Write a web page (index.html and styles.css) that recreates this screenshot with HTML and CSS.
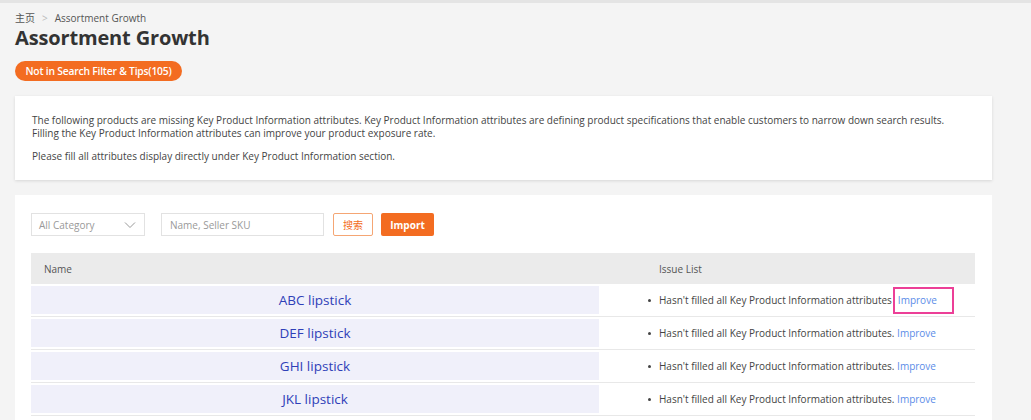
FILE: index.html
```html
<!DOCTYPE html>
<html lang="en">
  <head>
    <meta charset="UTF-8" />
    <title>Assortment Growth</title>
    <link rel="stylesheet" href="styles.css">
  </head>
  <body>
    <div class="page">
      <!-- Cabecera -->
      <div class="breadcrumb">
        <span>主页</span>
        <span class="sep">&gt;</span>
        <span>Assortment Growth</span>
      </div>
      <h1>Assortment Growth</h1>
      <button class="pill">Not in Search Filter &amp; Tips(105)</button>

      <!-- Aviso -->
      <div class="card notice">
        <p>
          The following products are missing Key Product Information attributes. Key Product Information attributes are defining product specifications that enable customers to narrow down search results.<br />
          Filling the Key Product Information attributes can improve your product exposure rate.
        </p>
        <p>Please fill all attributes display directly under Key Product Information section.</p>
      </div>

      <!-- Lista -->
      <div class="card list">
        <div class="filters">
          <div class="select">
            <span>All Category</span>
            <svg width="12" height="8" viewBox="0 0 12 8"><path d="M1 1.5 6 6.5 11 1.5" fill="none" stroke="#999" stroke-width="1" /></svg>
          </div>
          <input type="text" class="search" placeholder="Name, Seller SKU" />
          <button class="btn-outline">搜索</button>
          <button class="btn-fill">Import</button>
        </div>

        <div class="table">
          <div class="thead">
            <div class="col-name">Name</div>
            <div class="col-issue">Issue List</div>
          </div>
          <div class="row">
            <div class="col-name"><span class="name">ABC lipstick</span></div>
            <div class="col-issue">
              <span class="dot"></span>Hasn't filled all Key Product Information attributes<span class="hl"><a href="#">Improve</a></span>
            </div>
          </div>
          <div class="row">
            <div class="col-name"><span class="name">DEF lipstick</span></div>
            <div class="col-issue"><span class="dot"></span>Hasn't filled all Key Product Information attributes. <a href="#">Improve</a></div>
          </div>
          <div class="row">
            <div class="col-name"><span class="name">GHI lipstick</span></div>
            <div class="col-issue"><span class="dot"></span>Hasn't filled all Key Product Information attributes. <a href="#">Improve</a></div>
          </div>
          <div class="row">
            <div class="col-name"><span class="name">JKL lipstick</span></div>
            <div class="col-issue"><span class="dot"></span>Hasn't filled all Key Product Information attributes. <a href="#">Improve</a></div>
          </div>
        </div>
      </div>
    </div>
  </body>
</html>
```

FILE: styles.css
```css
* {
  margin: 0;
  padding: 0;
  box-sizing: border-box;
}

body {
  font-family: "Open Sans", Arial, "Noto Sans CJK SC", sans-serif;
  background-color: #f4f4f4;
  color: #333;
  border-top: 3px solid #e4e4e4;
  overflow: hidden;
}

.page {
  width: 977px;
  margin-left: 15px;
  padding-top: 8px;
}

.breadcrumb {
  font-size: 10px;
  color: #555;
  line-height: 14px;
  display: flex;
  gap: 7px;
}

.breadcrumb .sep {
  color: #bbb;
}

h1 {
  font-size: 20px;
  font-weight: 700;
  color: #333;
  line-height: 26px;
  letter-spacing: -0.15px;
}

.pill {
  margin-top: 10px;
  height: 20px;
  width: 167px;
  border: none;
  border-radius: 10px;
  background-color: #f36c21;
  color: #fff;
  font-family: inherit;
  font-size: 10.3px;
  font-weight: 600;
  letter-spacing: -0.2px;
}

.card {
  background-color: #fff;
}

.notice {
  margin-top: 15px;
  height: 84px;
  padding: 18px 17px 0;
  box-shadow: 0 1px 3px rgba(0, 0, 0, 0.12);
  font-size: 10px;
  line-height: 13px;
  color: #444;
}

.notice p + p {
  margin-top: 10px;
}

.list {
  margin-top: 15px;
  padding: 18px 17px 0 16px;
  height: 230px;
}

.filters {
  display: flex;
  align-items: center;
  height: 23px;
}

.select {
  width: 114px;
  height: 23px;
  border: 1px solid #e2e2e2;
  display: flex;
  align-items: center;
  justify-content: space-between;
  padding: 0 8px 0 7px;
  font-size: 10px;
  color: #999;
}

.search {
  width: 163px;
  height: 23px;
  margin-left: 16px;
  border: 1px solid #e2e2e2;
  padding: 0 8px;
  font-family: inherit;
  font-size: 10px;
  color: #333;
}

.search::placeholder {
  color: #999;
}

.btn-outline,
.btn-fill {
  height: 23px;
  border-radius: 2px;
  font-family: inherit;
  font-size: 10px;
}

.btn-outline {
  width: 40px;
  margin-left: 9px;
  border: 1px solid #f5a674;
  background-color: #fff;
  color: #f36c21;
}

.btn-fill {
  width: 53px;
  margin-left: 8px;
  border: none;
  background-color: #f36c21;
  color: #fff;
  font-weight: 700;
}

.table {
  margin-top: 17px;
  width: 944px;
}

.thead,
.row {
  display: grid;
  grid-template-columns: 568px 1fr;
}

.thead {
  height: 31px;
  background-color: #ebebeb;
  align-items: center;
  font-size: 10px;
  color: #555;
}

.thead .col-name {
  padding-left: 13px;
}

.thead .col-issue {
  padding-left: 60px;
}

.row {
  height: 33px;
  border-bottom: 1px solid #e8e8e8;
  padding: 2px 0 2px;
}

.row .col-name {
  background-color: #f0f0fa;
  display: flex;
  align-items: center;
  justify-content: center;
}

.name {
  font-size: 13.5px;
  font-weight: 500;
  color: #2f3fb8;
}

.row .col-issue {
  display: flex;
  align-items: center;
  padding-left: 49px;
  font-size: 10px;
  color: #444;
  white-space: pre;
}

.dot {
  width: 3px;
  height: 3px;
  border-radius: 50%;
  background-color: #444;
  margin-right: 8px;
}

.col-issue a {
  color: #5b8ce8;
  text-decoration: none;
}

.hl {
  display: flex;
  align-items: center;
  height: 27px;
  margin-left: 1px;
  padding: 0 15px 0 3px;
  border: 2px solid #ec3f97;
}
```
